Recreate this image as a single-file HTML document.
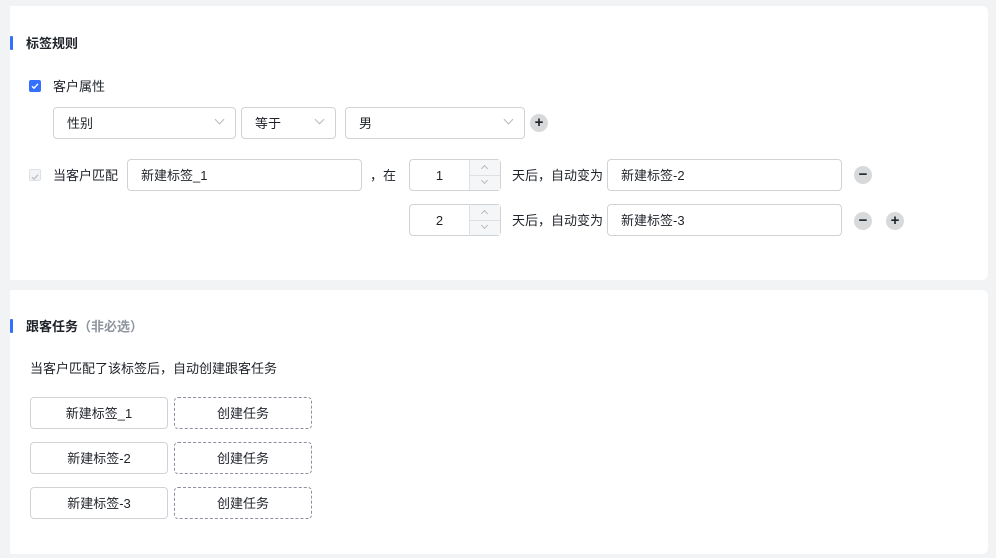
<!DOCTYPE html>
<html><head><meta charset="utf-8"><style>
*{box-sizing:border-box;margin:0;padding:0}
body{width:996px;height:558px;background:#f2f3f5;font-family:"Liberation Sans","Noto Sans CJK SC",sans-serif;font-size:13px;color:#1f2329;position:relative;overflow:hidden}
.card{position:absolute;left:10px;width:978px;background:#fff;border-radius:0 6px 6px 0}
.bar{position:absolute;left:10px;width:3px;background:#3370ff;border-radius:1px}
.t{position:absolute;line-height:18px;white-space:nowrap;margin-top:1px}
.box{position:absolute;border:1px solid #d0d3d6;border-radius:4px;background:#fff;height:32px;line-height:32px;padding-left:13px;white-space:nowrap}
.chev{position:absolute;right:12px;top:8px;width:7px;height:7px;border-right:1px solid #b6b9be;border-bottom:1px solid #b6b9be;transform:rotate(45deg)}
.cb{position:absolute;width:12px;height:12px;border-radius:2px}
.circ{position:absolute;width:18px;height:18px;border-radius:50%;background:#d8d9db;color:#1f2329;text-align:center;line-height:18px;font-weight:bold;font-size:15px}
.num{position:absolute;border:1px solid #d0d3d6;border-radius:4px;width:92px;height:32px;background:#fff}
.num .v{position:absolute;left:0;width:59px;text-align:center;line-height:32px}
.num .s{position:absolute;left:59px;top:0;width:31px;height:30px;background:#f5f6f7;border-left:1px solid #dee0e3}
.num .s:after{content:"";position:absolute;left:0;right:0;top:15px;border-top:1px solid #dee0e3}
.up,.dn{position:absolute;left:12px;width:5px;height:5px;border-left:1px solid #b6b9be;border-top:1px solid #b6b9be}
.up{top:6px;transform:rotate(45deg)}
.dn{top:18px;transform:rotate(225deg)}
.btn{position:absolute;width:138px;height:32px;border:1px solid #d0d3d6;border-radius:4px;text-align:center;line-height:32px}
.btn.d{border:1px dashed #8f8fa3}
</style></head><body>
<div class="card" style="top:6px;height:274px"></div>
<div class="card" style="top:290px;height:264px"></div>

<div class="bar" style="top:36px;height:14px"></div>
<div class="t" style="left:26px;top:34px;font-weight:bold">标签规则</div>

<div class="cb" style="left:29px;top:80px;background:#3370ff"><svg width="12" height="12"><path d="M3 6.2l2 2 4-4.4" stroke="#fff" stroke-width="1.4" fill="none"/></svg></div>
<div class="t" style="left:53px;top:77px">客户属性</div>

<div class="box" style="left:53px;top:107px;width:183px">性别<span class="chev"></span></div>
<div class="box" style="left:241px;top:107px;width:95px">等于<span class="chev"></span></div>
<div class="box" style="left:345px;top:107px;width:180px">男<span class="chev"></span></div>
<div class="circ" style="left:530px;top:114px">+</div>

<div class="cb" style="left:29px;top:169px;background:#f2f3f5;border:1px solid #dee0e3"><svg width="10" height="10"><path d="M2 5.2l2 2 4-4.4" stroke="#bbbfc4" stroke-width="1.3" fill="none"/></svg></div>
<div class="t" style="left:53px;top:166px">当客户匹配</div>
<div class="box" style="left:127px;top:159px;width:235px">新建标签_1</div>
<div class="t" style="left:370px;top:166px">，在</div>
<div class="num" style="left:409px;top:159px"><div class="v">1</div><div class="s"><i class="up"></i><i class="dn"></i></div></div>
<div class="t" style="left:512px;top:166px">天后，自动变为</div>
<div class="box" style="left:607px;top:159px;width:235px">新建标签-2</div>
<div class="circ" style="left:854px;top:166px">−</div>

<div class="num" style="left:409px;top:204px"><div class="v">2</div><div class="s"><i class="up"></i><i class="dn"></i></div></div>
<div class="t" style="left:512px;top:211px">天后，自动变为</div>
<div class="box" style="left:607px;top:204px;width:235px">新建标签-3</div>
<div class="circ" style="left:854px;top:212px">−</div>
<div class="circ" style="left:886px;top:212px">+</div>

<div class="bar" style="top:319px;height:14px"></div>
<div class="t" style="left:26px;top:317px;font-weight:bold">跟客任务<span style="color:#8f959e">（非必选）</span></div>
<div class="t" style="left:30px;top:359px">当客户匹配了该标签后，自动创建跟客任务</div>

<div class="btn" style="left:30px;top:397px">新建标签_1</div>
<div class="btn d" style="left:174px;top:397px">创建任务</div>
<div class="btn" style="left:30px;top:442px">新建标签-2</div>
<div class="btn d" style="left:174px;top:442px">创建任务</div>
<div class="btn" style="left:30px;top:487px">新建标签-3</div>
<div class="btn d" style="left:174px;top:487px">创建任务</div>
</body></html>
